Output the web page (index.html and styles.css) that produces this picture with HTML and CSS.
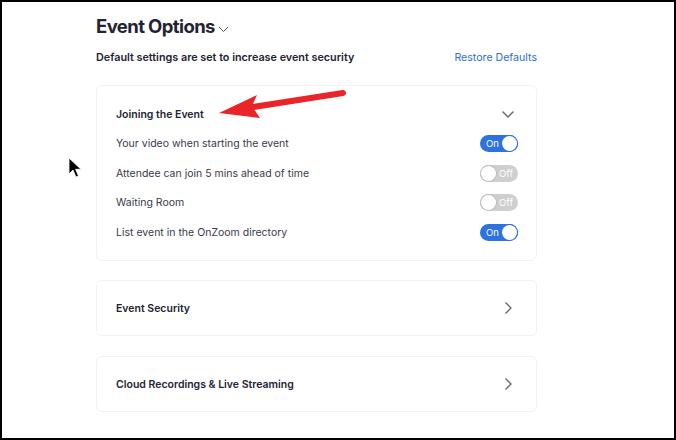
FILE: index.html
```html
<!DOCTYPE html>
<html>
<head>
<meta charset="utf-8">
<link rel="stylesheet" href="styles.css">
</head>
<body>
<div class="frame">
  <div class="content">
    <h1 class="title">Event Options <svg class="title-caret" width="11" height="7" viewBox="0 0 11 7"><path d="M1 1 L5.5 5.5 L10 1" fill="none" stroke="#555" stroke-width="1"/></svg></h1>
    <div class="subbar">
      <span class="subtitle">Default settings are set to increase event security</span>
      <a class="restore">Restore Defaults</a>
    </div>

    <section class="card card-open">
      <div class="card-head">
        <span class="card-title">Joining the Event</span>
        <svg class="chev" width="14" height="9" viewBox="0 0 14 9"><path d="M1.5 1.5 L7 7 L12.5 1.5" fill="none" stroke="#666" stroke-width="1.4"/></svg>
      </div>
      <div class="row"><span>Your video when starting the event</span><span class="toggle on"><span class="tlabel">On</span><span class="knob"></span></span></div>
      <div class="row"><span>Attendee can join 5 mins ahead of time</span><span class="toggle off"><span class="knob"></span><span class="tlabel">Off</span></span></div>
      <div class="row"><span>Waiting Room</span><span class="toggle off"><span class="knob"></span><span class="tlabel">Off</span></span></div>
      <div class="row"><span>List event in the OnZoom directory</span><span class="toggle on"><span class="tlabel">On</span><span class="knob"></span></span></div>
    </section>

    <section class="card card-closed">
      <span class="card-title">Event Security</span>
      <svg class="chev" width="9" height="14" viewBox="0 0 9 14"><path d="M1.5 1.5 L7 7 L1.5 12.5" fill="none" stroke="#666" stroke-width="1.3"/></svg>
    </section>

    <section class="card card-closed">
      <span class="card-title">Cloud Recordings &amp; Live Streaming</span>
      <svg class="chev" width="9" height="14" viewBox="0 0 9 14"><path d="M1.5 1.5 L7 7 L1.5 12.5" fill="none" stroke="#666" stroke-width="1.3"/></svg>
    </section>
  </div>

  <svg class="arrow" width="135" height="36" viewBox="0 0 135 36">
    <path d="M128 7 L38 21" stroke="#e8262a" stroke-width="6" stroke-linecap="round" fill="none"/>
    <path d="M4 27 L42 9 L37 20 L45 32 Z" fill="#e8262a"/>
  </svg>

  <svg class="cursor" width="14" height="22" viewBox="0 0 14 22">
    <path d="M1 1 L1 17 L5 13 L8 20 L10.5 19 L7.6 12.3 L13 12.3 Z" fill="#000" stroke="#fff" stroke-width="0.8"/>
  </svg>
</div>
</body>
</html>
```

FILE: styles.css
```css
* { box-sizing: border-box; }
html, body { margin: 0; padding: 0; background: #fff; }
body {
  font-family: "Inter", "Liberation Sans", Arial, sans-serif;
  color: #232333;
}
.frame {
  position: relative;
  width: 676px;
  height: 440px;
  border: 2px solid #000;
  overflow: hidden;
}
.content {
  margin-left: 94px;
  width: 441px;
  padding-top: 12px;
}
.title {
  margin: 0;
  font-size: 18.5px;
  font-weight: 700;
  letter-spacing: -0.6px;
  line-height: 24px;
  color: #232333;
  display: flex;
  align-items: center;
  gap: 3px;
}
.title-caret { margin-top: 6px; }
.subbar {
  display: flex;
  justify-content: space-between;
  align-items: center;
  margin-top: 11px;
  height: 16px;
  font-size: 10.8px;
}
.subtitle { font-weight: 600; color: #232333; }
.restore { color: #2d6fd1; font-weight: 400; font-size: 10.6px; }
.card {
  border: 1px solid #f2f2f2;
  border-radius: 6px;
  padding: 0 18px 0 19px;
}
.card-open {
  margin-top: 20px;
  height: 176px;
  padding-top: 19px;
}
.card-head {
  display: flex;
  justify-content: space-between;
  align-items: center;
  height: 18px;
  margin-bottom: 6px;
}
.card-head .chev { margin-right: 3px; }
.card-title {
  font-size: 10.5px;
  font-weight: 600;
  color: #232333;
}
.row {
  display: flex;
  justify-content: space-between;
  align-items: center;
  height: 29.5px;
  font-size: 10.5px;
  color: #39394d;
}
.toggle {
  width: 38px;
  height: 17px;
  border-radius: 9px;
  display: flex;
  align-items: center;
  justify-content: space-between;
  padding: 0 1px;
  font-size: 9.5px;
  color: #fff;
}
.toggle.on { background: #2d72e0; padding-left: 6px; }
.toggle.off { background: #cfcfcf; padding-right: 5px; }
.knob {
  width: 15px;
  height: 15px;
  border-radius: 50%;
  background: #fff;
}
.toggle.on .knob { box-shadow: 0 0 0 1px #2d72e0; }
.toggle.off .knob { box-shadow: 0 0 0 1px #bdbdbd; }
.card-closed {
  display: flex;
  justify-content: space-between;
  align-items: center;
  height: 56px;
  margin-top: 19px;
}
.card-closed + .card-closed { margin-top: 20px; }
.card-closed .chev { margin-right: 5px; }
.arrow {
  position: absolute;
  left: 213px;
  top: 84px;
}
.cursor {
  position: absolute;
  left: 66px;
  top: 155px;
}
```
